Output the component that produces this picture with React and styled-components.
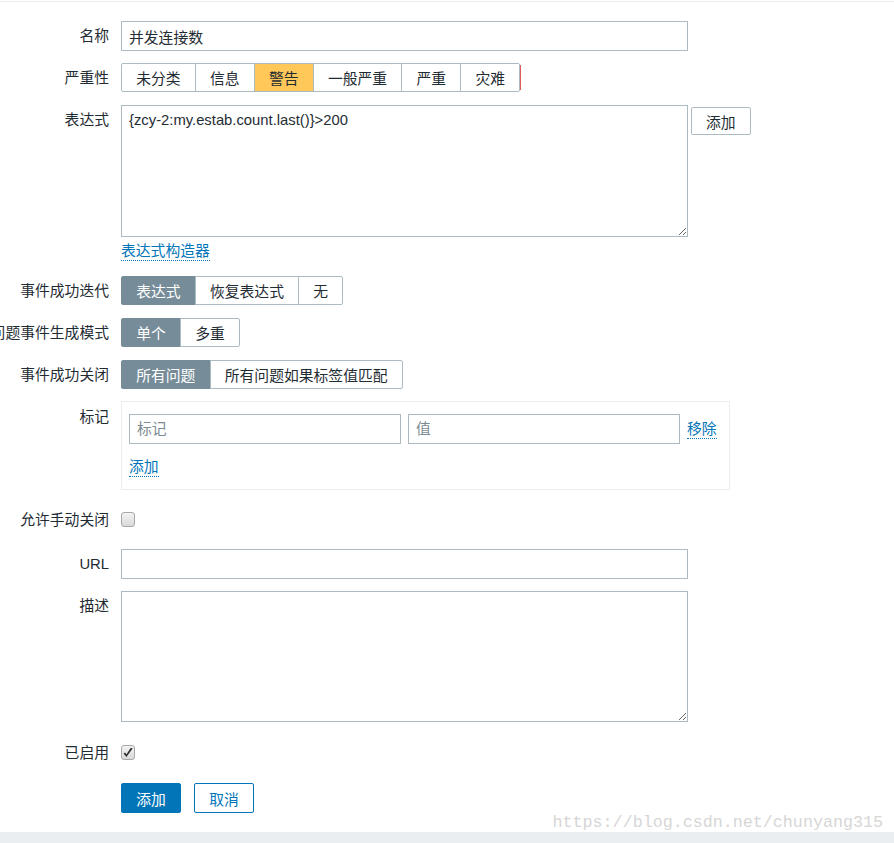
import styled, { createGlobalStyle } from "styled-components";

const GlobalStyle = createGlobalStyle`
  body {
    margin: 0;
    background: #ffffff;
    font-family: "Liberation Sans", "Noto Sans CJK SC", sans-serif;
    font-size: 14.8px;
    color: #1f2c33;
    overflow-x: hidden;
  }
`;

const severities = ["未分类", "信息", "警告", "一般严重", "严重", "灾难"];

function CheckBox({ checked }) {
  return (
    <Box>
      {checked && (
        <svg width="12" height="12" viewBox="0 0 12 12">
          <path d="M1.6 6.4 L4.4 10 L10.6 1.4 L8.8 0.8 L4.4 7.4 L3.1 5.4 Z" fill="#2b2b2b" />
        </svg>
      )}
    </Box>
  );
}

function App() {
  return (
    <Page>
      <GlobalStyle />
      <TopRule />
      <Form>
        <Row>
          <Label>名称</Label>
          <Field>
            <TextInput defaultValue="并发连接数" />
          </Field>
        </Row>
        <Row>
          <Label>严重性</Label>
          <Field>
            <Group>
              {severities.map((s) => (
                <SegButton key={s} $variant={s === "警告" ? "warning" : "plain"}>
                  {s}
                </SegButton>
              ))}
            </Group>
            <Marker />
          </Field>
        </Row>
        <Row>
          <Label>表达式</Label>
          <Stack>
            <Field>
              <TextArea defaultValue="{zcy-2:my.estab.count.last()}>200" />
              <SideButton>添加</SideButton>
            </Field>
            <Link $mt={5} $mb={3}>表达式构造器</Link>
          </Stack>
        </Row>
        <Row>
          <Label>事件成功迭代</Label>
          <Field>
            <Group>
              <SegButton $variant="active">表达式</SegButton>
              <SegButton>恢复表达式</SegButton>
              <SegButton>无</SegButton>
            </Group>
          </Field>
        </Row>
        <Row>
          <Label>问题事件生成模式</Label>
          <Field>
            <Group>
              <SegButton $variant="active">单个</SegButton>
              <SegButton>多重</SegButton>
            </Group>
          </Field>
        </Row>
        <Row>
          <Label>事件成功关闭</Label>
          <Field>
            <Group>
              <SegButton $variant="active">所有问题</SegButton>
              <SegButton>所有问题如果标签值匹配</SegButton>
            </Group>
          </Field>
        </Row>
        <Row>
          <Label>标记</Label>
          <TagBox>
            <TagRow>
              <TagInput placeholder="标记" />
              <TagInput placeholder="值" />
              <Link>移除</Link>
            </TagRow>
            <Link $mt={14}>添加</Link>
          </TagBox>
        </Row>
        <Row $center $h={35}>
          <Label>允许手动关闭</Label>
          <Field>
            <CheckBox />
          </Field>
        </Row>
        <Row>
          <Label>URL</Label>
          <Field>
            <TextInput />
          </Field>
        </Row>
        <Row>
          <Label>描述</Label>
          <Field>
            <TextArea $h={131} />
          </Field>
        </Row>
        <Row $center $h={37}>
          <Label>已启用</Label>
          <Field>
            <CheckBox checked />
          </Field>
        </Row>
        <Row>
          <span />
          <Actions>
            <Button $primary>添加</Button>
            <Button>取消</Button>
          </Actions>
        </Row>
      </Form>
      <Footer />
      <Watermark>https://blog.csdn.net/chunyang315</Watermark>
    </Page>
  );
}

export default App;

const Page = styled.div`
  position: relative;
  padding-top: 1px;
  overflow: hidden;
`;
const TopRule = styled.div`
  height: 1px;
  background: #ebebeb;
`;
const Form = styled.div`
  display: flex;
  flex-direction: column;
  gap: 12px;
  padding-top: 19px;
`;
const Row = styled.div`
  display: grid;
  grid-template-columns: 109px auto;
  column-gap: 12px;
  align-items: ${({ $center }) => ($center ? "center" : "start")};
  min-height: ${({ $h }) => $h || 30}px;
`;
const Label = styled.div`
  display: flex;
  justify-content: flex-end;
  white-space: nowrap;
  line-height: 30px;
`;
const Field = styled.div`
  display: flex;
  align-items: flex-start;
`;
const Stack = styled.div`
  display: flex;
  flex-direction: column;
  align-items: flex-start;
`;
const TextInput = styled.input`
  box-sizing: border-box;
  width: 567px;
  height: 30px;
  margin: 0;
  padding: 0 7px;
  border: 1px solid #acbbc2;
  border-radius: 0;
  font: inherit;
  color: #1f2c33;
  outline: none;
`;
const TextArea = styled.textarea`
  box-sizing: border-box;
  width: 567px;
  height: ${({ $h }) => $h || 132}px;
  margin: 0;
  padding: 4px 7px;
  border: 1px solid #acbbc2;
  border-radius: 0;
  font: inherit;
  line-height: 20px;
  color: #1f2c33;
  resize: vertical;
  outline: none;
`;
const SideButton = styled.button`
  box-sizing: border-box;
  height: 28px;
  margin: 2px 0 0 3px;
  padding: 0 14px;
  background: #ffffff;
  border: 1px solid #acbbc2;
  border-radius: 2px;
  font: inherit;
  color: #1f2c33;
`;
const Group = styled.div`
  display: flex;
`;
const SegButton = styled.button`
  box-sizing: border-box;
  height: 29px;
  margin: 0 0 0 -1px;
  padding: 0 14.2px;
  font: inherit;
  white-space: nowrap;
  border: 1px solid ${({ $variant }) => ($variant === "active" ? "#768d99" : "#acbbc2")};
  border-radius: 0;
  color: ${({ $variant }) => ($variant === "active" ? "#ffffff" : "#1f2c33")};
  background: ${({ $variant }) =>
    $variant === "active" ? "#768d99" : $variant === "warning" ? "#ffc859" : "#ffffff"};
  &:first-child {
    margin-left: 0;
    border-radius: 2px 0 0 2px;
  }
  &:last-child {
    border-radius: 0 2px 2px 0;
  }
`;
const Marker = styled.span`
  width: 1px;
  height: 25px;
  margin-top: 2px;
  background: #e45959;
`;
const Link = styled.span`
  margin-top: ${({ $mt }) => $mt || 0}px;
  margin-bottom: ${({ $mb }) => $mb || 0}px;
  line-height: 18px;
  color: #0275b8;
  border-bottom: 1px dotted #0275b8;
  white-space: nowrap;
  align-self: flex-start;
`;
const TagBox = styled.div`
  box-sizing: border-box;
  width: 609px;
  display: flex;
  flex-direction: column;
  margin-top: -1px;
  padding: 12px 11px 12px 7px;
  border: 1px solid #ebeef0;
`;
const TagRow = styled.div`
  display: flex;
  align-items: center;
  gap: 7px;
  & > span {
    align-self: center;
  }
`;
const TagInput = styled(TextInput)`
  width: 272px;
  &::placeholder {
    color: #7c8a92;
  }
`;
const Box = styled.span`
  box-sizing: border-box;
  display: flex;
  align-items: center;
  justify-content: center;
  width: 14px;
  height: 15px;
  border: 1px solid #a8a8a8;
  border-radius: 3px;
  background: linear-gradient(#f3f3f3, #d9d9d9);
`;
const Actions = styled.div`
  display: flex;
  gap: 13px;
`;
const Button = styled.button`
  box-sizing: border-box;
  width: 60px;
  height: 30px;
  margin: 0;
  padding: 0;
  border: 1px solid #0275b8;
  border-radius: 2px;
  font: inherit;
  background: ${({ $primary }) => ($primary ? "#0275b8" : "#ffffff")};
  color: ${({ $primary }) => ($primary ? "#ffffff" : "#0275b8")};
`;
const Footer = styled.div`
  height: 11px;
  margin-top: 19px;
  background: #ebeef0;
`;
const Watermark = styled.div`
  position: absolute;
  right: 11px;
  bottom: 10px;
  font-family: "Liberation Mono", monospace;
  font-size: 16.7px;
  line-height: 20px;
  color: #d6d6d6;
  pointer-events: none;
`;
